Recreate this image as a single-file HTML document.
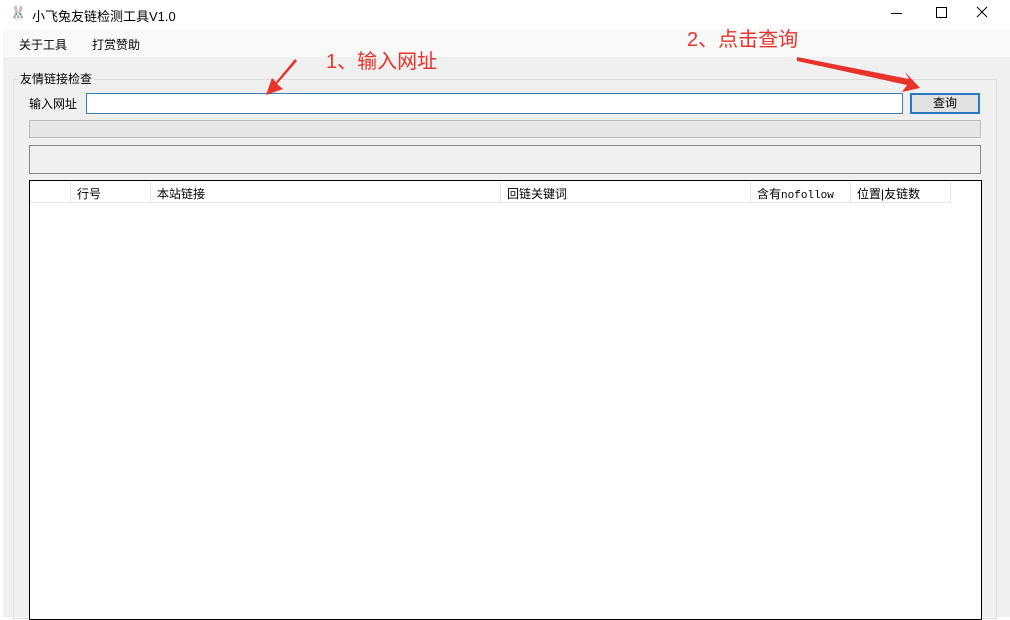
<!DOCTYPE html>
<html><head><meta charset="utf-8"><style>
*{margin:0;padding:0;box-sizing:border-box}
body{width:1010px;height:617px;overflow:hidden;background:#fff;font-family:"Liberation Sans","Noto Sans CJK SC",sans-serif;font-size:12px;color:#000;position:relative}
.a{position:absolute}
</style></head><body>
<div class="a" style="left:0;top:0;width:1010px;height:29px;background:#fff"></div>
<div class="a" style="left:10px;top:5px;font-size:13px;color:#ccc">🐰</div>
<div class="a" style="left:32px;top:6px;font-size:13px">小飞兔友链检测工具V1.0</div>
<div class="a" style="left:891px;top:13px;width:11px;height:1px;background:#000"></div>
<div class="a" style="left:936px;top:7px;width:11px;height:11px;border:1px solid #000"></div>
<svg class="a" style="left:976px;top:6px" width="12" height="12"><path d="M1 1L11 11M11 1L1 11" stroke="#000" stroke-width="1"/></svg>
<div class="a" style="left:3px;top:29px;width:1007px;height:588px;background:#f0f0f0"></div>
<div class="a" style="left:3px;top:29px;width:1007px;height:28px;background:#f9f9f9"></div>
<div class="a" style="left:19px;top:36px">关于工具</div>
<div class="a" style="left:92px;top:36px">打赏赞助</div>
<div class="a" style="left:13px;top:79px;width:984px;height:540px;border:1px solid #dcdcdc"></div>
<div class="a" style="left:18px;top:70px;background:#f0f0f0;padding:0 2px">友情链接检查</div>
<div class="a" style="left:29px;top:95px">输入网址</div>
<div class="a" style="left:86px;top:93px;width:817px;height:21px;background:#fff;border:1px solid #3b7fb6"></div>
<div class="a" style="left:910px;top:93px;width:70px;height:21px;background:#e1e1e1;border:2px solid #2a78c2;text-align:center;line-height:17px">查询</div>
<div class="a" style="left:29px;top:120px;width:952px;height:18px;background:#e6e6e6;border:1px solid #bcbcbc"></div>
<div class="a" style="left:29px;top:145px;width:952px;height:29px;border:1px solid #8a8a8a"></div>
<div class="a" style="left:29px;top:180px;width:953px;height:440px;background:#fff;border:1px solid #000"></div>
<div class="a" style="left:30px;top:181px;width:921px;height:22px;border-bottom:1px solid #e5e5e5"></div>
<div class="a" style="left:70px;top:182px;width:1px;height:21px;background:#e5e5e5"></div>
<div class="a" style="left:150px;top:182px;width:1px;height:21px;background:#e5e5e5"></div>
<div class="a" style="left:500px;top:182px;width:1px;height:21px;background:#e5e5e5"></div>
<div class="a" style="left:750px;top:182px;width:1px;height:21px;background:#e5e5e5"></div>
<div class="a" style="left:850px;top:182px;width:1px;height:21px;background:#e5e5e5"></div>
<div class="a" style="left:950px;top:182px;width:1px;height:21px;background:#e5e5e5"></div>
<div class="a" style="left:77px;top:185px">行号</div>
<div class="a" style="left:157px;top:185px">本站链接</div>
<div class="a" style="left:507px;top:185px">回链关键词</div>
<div class="a" style="left:757px;top:185px">含有<span style="font-family:'Liberation Mono',monospace;font-size:11px">nofollow</span></div>
<div class="a" style="left:857px;top:185px">位置|友链数</div>
<div class="a" style="left:326px;top:45px;font-size:20px;color:#e8322a">1、输入网址</div>
<div class="a" style="left:687px;top:23px;font-size:20px;color:#e8322a">2、点击查询</div>
<svg class="a" style="left:0;top:0" width="1010" height="617">
<polygon points="297,61 277,84 283,89 266,95 272,78 276,82 295,59" fill="#e8322a"/>
<polygon points="797,57 909,79 905,72 920,88 902,92 907,85 797,61" fill="#e8322a"/>
</svg>
</body></html>
